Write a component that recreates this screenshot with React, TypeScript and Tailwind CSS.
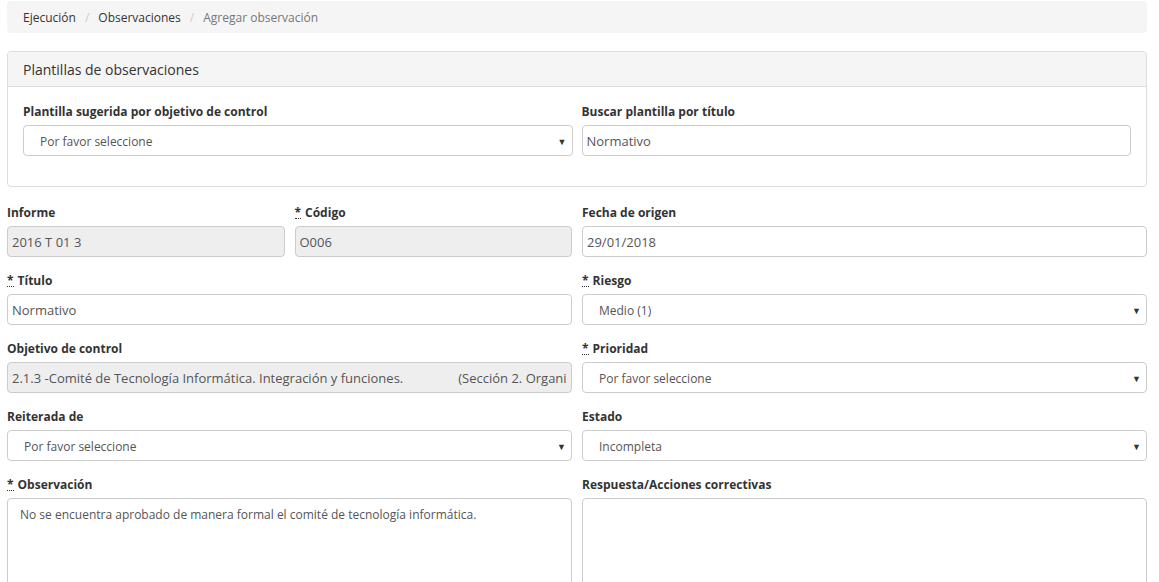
import React from "react";

const font = { fontFamily: '"Open Sans", "Liberation Sans", sans-serif' };

const Req = () => (
  <abbr className="no-underline border-b border-dotted border-[#333] mr-1 leading-[10px] inline-block" title="obligatorio">
    *
  </abbr>
);

const Label = ({ children, req }: { children: React.ReactNode; req?: boolean }) => (
  <label className="block h-[14px] mb-[6px] text-[12px] font-bold leading-[14px] text-[#333]">
    {req && <Req />}
    {children}
  </label>
);

const Input = ({ children, disabled }: { children: React.ReactNode; disabled?: boolean }) => (
  <div
    className={`h-[31px] pt-[2px] pl-[4px] pr-[5px] flex items-center border border-[#ccc] rounded-[4px] text-[13px] text-[#555] whitespace-nowrap overflow-hidden ${
      disabled ? "bg-[#eee]" : "bg-white"
    }`}
  >
    {children}
  </div>
);

const Select = ({ value }: { value: string }) => (
  <div className="h-[31px] pt-[2px] pl-[16px] pr-[5px] flex items-center justify-between border border-[#ccc] rounded-[4px] bg-white text-[12px] text-[#555]">
    <span>{value}</span>
    <span className="text-[9px] text-[#333]">▼</span>
  </div>
);

const Field = ({ label, req, children }: { label: string; req?: boolean; children: React.ReactNode }) => (
  <div>
    <Label req={req}>{label}</Label>
    {children}
  </div>
);

export default function App() {
  return (
    <div className="bg-white w-[1159px] h-[582px] overflow-hidden" style={font}>
      <div className="ml-[7px] w-[1140px] pt-[1px]">
        <nav className="h-[32px] pt-[1px] px-[16px] flex items-center bg-[#f5f5f5] rounded-[4px] text-[12px]">
          <span className="text-[#333]">Ejecución</span>
          <span className="px-[9px] text-[#ccc]">/</span>
          <span className="text-[#333]">Observaciones</span>
          <span className="px-[9px] text-[#ccc]">/</span>
          <span className="text-[#777]">Agregar observación</span>
        </nav>

        <div className="mt-[18px] border border-[#ddd] rounded-[4px]">
          <div className="h-[35px] px-[15px] flex items-center bg-[#f5f5f5] border-b border-[#ddd] text-[14px] text-[#333] rounded-t-[4px]">
            Plantillas de observaciones
          </div>
          <div className="px-[15px] pt-[18px] pb-[30px] grid grid-cols-2 gap-[9px]">
            <Field label="Plantilla sugerida por objetivo de control">
              <Select value="Por favor seleccione" />
            </Field>
            <Field label="Buscar plantilla por título">
              <Input>Normativo</Input>
            </Field>
          </div>
        </div>

        <div className="mt-[19px] grid grid-cols-2 gap-x-[10px] gap-y-[17px]">
          <div className="grid grid-cols-2 gap-[10px]">
            <Field label="Informe">
              <Input disabled>2016 T 01 3</Input>
            </Field>
            <Field label="Código" req>
              <Input disabled>O006</Input>
            </Field>
          </div>
          <Field label="Fecha de origen">
            <Input>29/01/2018</Input>
          </Field>

          <Field label="Título" req>
            <Input>Normativo</Input>
          </Field>
          <Field label="Riesgo" req>
            <Select value="Medio (1)" />
          </Field>

          <Field label="Objetivo de control">
            <Input disabled>
              <span>2.1.3 -Comité de Tecnología Informática. Integración y funciones.</span>
              <span className="ml-[55px]">(Sección 2. Organi</span>
            </Input>
          </Field>
          <Field label="Prioridad" req>
            <Select value="Por favor seleccione" />
          </Field>

          <Field label="Reiterada de">
            <Select value="Por favor seleccione" />
          </Field>
          <Field label="Estado">
            <Select value="Incompleta" />
          </Field>

          <Field label="Observación" req>
            <div className="h-[120px] px-[12px] py-[7px] border border-[#ccc] rounded-[4px] text-[12px] text-[#555]">
              No se encuentra aprobado de manera formal el comité de tecnología informática.
            </div>
          </Field>
          <Field label="Respuesta/Acciones correctivas">
            <div className="h-[120px] border border-[#ccc] rounded-[4px]" />
          </Field>
        </div>
      </div>
    </div>
  );
}
